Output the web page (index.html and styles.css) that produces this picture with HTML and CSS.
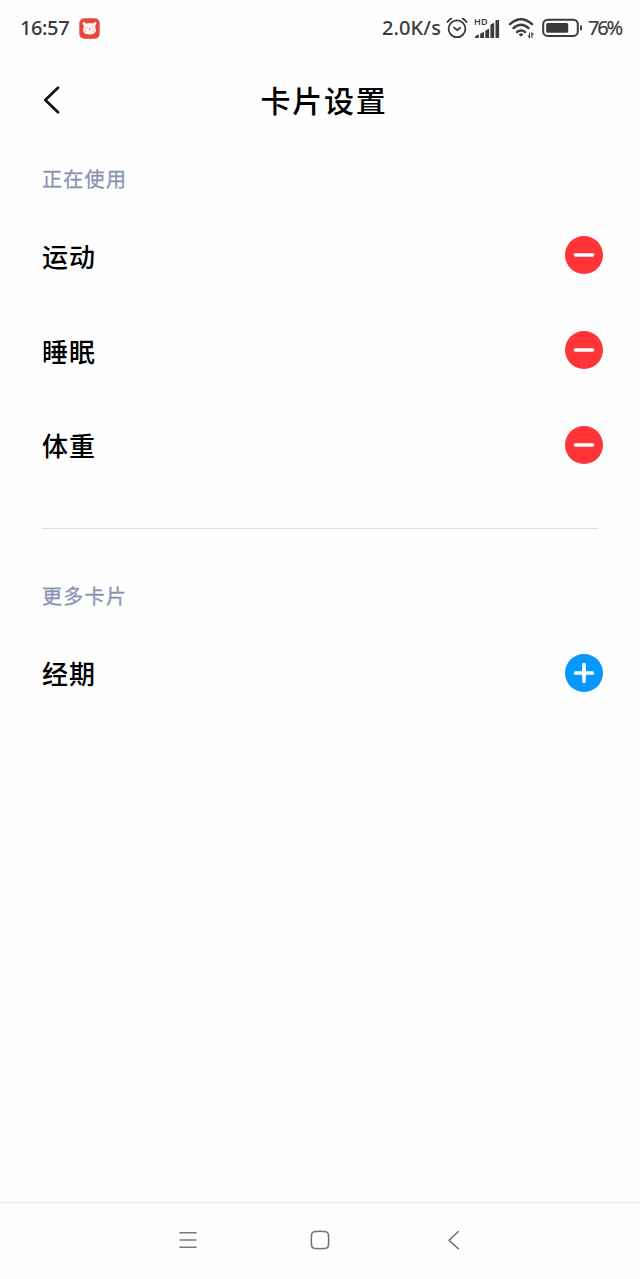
FILE: index.html
```html
<!DOCTYPE html>
<html lang="zh-CN">
<head>
<meta charset="utf-8">
<title>卡片设置</title>
<link rel="stylesheet" href="styles.css">
</head>
<body>
<div class="screen">
  <div class="status">
    <span class="time">16:57</span>
    <svg class="app" width="21" height="21" viewBox="0 0 21 21"><rect x=".3" y=".3" width="20.4" height="20.4" rx="5" fill="#e9463f"/><path d="M3.6 4.4Q5.5 3 7 5.4Q10.5 4.8 14 5.4Q15.5 3 17.4 4.4Q17.8 6.6 16 7.7Q16.6 10 17 12.5Q16.5 16.6 10.5 16.6T4 12.5Q4.4 10 5 7.7Q3.2 6.6 3.6 4.4Z" fill="#fff0ec"/><circle cx="7.8" cy="9.8" r=".6" fill="#caa"/><circle cx="13.2" cy="9.8" r=".6" fill="#caa"/><circle cx="10.5" cy="11" r=".8" fill="#877"/><circle cx="6.5" cy="13" r="1.1" fill="#f9c9c0"/><circle cx="14.5" cy="13" r="1.1" fill="#f9c9c0"/></svg>
    <span class="speed">2.0K/s</span>
    <svg class="alarm" width="22" height="22" viewBox="0 0 22 22" fill="none" stroke="#3b3b3b" stroke-width="1.8" stroke-linecap="round" stroke-linejoin="round"><circle cx="11" cy="11.8" r="8.4"/><path d="M1.4 5Q3 2.6 5.4 1.6M16.6 1.6Q19 2.6 20.6 5M8 10.4L11 13.2L14.2 10.8"/></svg>
    <div class="signal">
      <span class="hd">HD</span>
      <svg width="26" height="20" viewBox="0 0 26 20" fill="#3b3b3b"><path d="M1 17.4Q1 15.8 4.8 14.6V18H1.6Q1 18 1 17.4Z"/><path d="M6.2 13.8L10 11.8V18H6.2Z"/><path d="M11.3 10.8L15.1 8.4V18H11.3Z"/><path d="M16.4 5.2Q16.4 4.6 17 4.2L20.2 2.8V18H16.4Z"/><rect x="21.5" y="0" width="3.6" height="18" rx=".8"/></svg>
    </div>
    <svg class="wifi" width="27" height="22" viewBox="0 0 27 22" fill="none" stroke="#3b3b3b" stroke-width="2.4" stroke-linecap="round"><path d="M2 7.2Q13 -2.8 24 7.2M5.5 11.2Q13 4.4 20.5 11.2M9 15Q13 11.8 17 15"/><path d="M10.6 17.3Q13 15.4 15.4 17.3L13 19.8Z" fill="#3b3b3b" stroke="none"/><path d="M21.5 16V20.5L20.2 19M23.9 20.5V16L25.2 17.5" stroke-width="1.1"/></svg>
    <svg class="battery" width="41" height="20" viewBox="0 0 41 20"><rect x="1.2" y="1.7" width="34.6" height="16.2" rx="4.5" fill="none" stroke="#3b3b3b" stroke-width="2"/><rect x="4.2" y="5" width="22" height="9.8" rx="1.5" fill="#3b3b3b"/><rect x="38" y="7.2" width="1.9" height="5.2" rx=".8" fill="#3b3b3b"/></svg>
    <span class="percent">76%</span>
  </div>
  <header class="header">
    <svg class="back" width="20" height="30" viewBox="0 0 20 30" fill="none" stroke="#111" stroke-width="2.7" stroke-linecap="round" stroke-linejoin="round"><path d="M16 2.8L3.3 15L16 27.2"/></svg>
    <h1 class="title">卡片设置</h1>
  </header>
  <main class="content">
    <section class="group">
      <h2 class="label">正在使用</h2>
      <div class="row"><span>运动</span><svg class="action" viewBox="0 0 38 38"><circle cx="19" cy="19" r="19" fill="#ff3436"/><path d="M10.5 19H27.5" stroke="#fff" stroke-width="3.6" stroke-linecap="round"/></svg></div>
      <div class="row"><span>睡眠</span><svg class="action" viewBox="0 0 38 38"><circle cx="19" cy="19" r="19" fill="#ff3436"/><path d="M10.5 19H27.5" stroke="#fff" stroke-width="3.6" stroke-linecap="round"/></svg></div>
      <div class="row"><span>体重</span><svg class="action" viewBox="0 0 38 38"><circle cx="19" cy="19" r="19" fill="#ff3436"/><path d="M10.5 19H27.5" stroke="#fff" stroke-width="3.6" stroke-linecap="round"/></svg></div>
    </section>
    <section class="group more">
      <h2 class="label">更多卡片</h2>
      <div class="row"><span>经期</span><svg class="action" viewBox="0 0 38 38"><circle cx="19" cy="19" r="19" fill="#0698fe"/><path d="M10.5 19H27.5M19 10.5V27.5" stroke="#fff" stroke-width="3.6" stroke-linecap="round"/></svg></div>
    </section>
  </main>
  <nav class="nav">
    <svg width="20" height="20" viewBox="0 0 20 20" stroke="#777" stroke-width="1.5" stroke-linecap="round"><path d="M4 2.8H20M4 10H20M4 17.2H20"/></svg>
    <svg width="20" height="20" viewBox="0 0 20 20" fill="none" stroke="#777" stroke-width="1.6"><path d="M10 1.3Q14 1.3 16 1.8Q18 2.3 18.3 4Q18.7 6 18.7 10T18.3 16Q18 17.8 16 18.3Q14 18.7 10 18.7T4 18.3Q2 17.8 1.7 16Q1.3 14 1.3 10T1.7 4Q2 2.3 4 1.8Q6 1.3 10 1.3Z"/></svg>
    <svg width="20" height="20" viewBox="0 0 20 20" fill="none" stroke="#777" stroke-width="1.6" stroke-linecap="round" stroke-linejoin="round"><path d="M14.3 1.5L5 10.3L14.3 18.7"/></svg>
  </nav>
</div>
</body>
</html>
```
FILE: styles.css
```css
* { box-sizing: border-box; }
body { margin: 0; background: #fff; color: #000; font-family: "Noto Sans CJK SC", sans-serif; }
svg { display: block; flex: none; overflow: visible; }
.screen { height: 1279px; display: flex; flex-direction: column; background: #fefefe; }
.status { height: 56px; display: flex; align-items: center; padding-left: 20px; color: #3b3b3b; font: 500 20px/56px "Noto Sans", sans-serif; white-space: nowrap; }
.time { width: 59px; letter-spacing: -.4px; }
.speed { width: 64px; margin-left: 282px; letter-spacing: .1px; }
.signal { width: 26px; height: 23px; margin-left: 6px; display: grid; }
.signal > * { grid-area: 1 / 1; }
.signal svg { align-self: end; }
.hd { font: 600 9px/10px "Noto Sans", sans-serif; align-self: start; letter-spacing: .3px; }
.wifi { margin-left: 8px; }
.battery { margin-left: 7px; margin-top: -1px; }
.percent { margin-left: 5px; letter-spacing: -2.2px; font-weight: 400; -webkit-text-stroke: .2px #3b3b3b; }
.header { height: 88px; display: grid; grid-template-columns: 60px 1fr 60px; align-items: center; padding: 0 42px; }
.title { margin: -2px -8px 0 0; font-size: 30px; font-weight: 500; line-height: 44px; letter-spacing: 1.8px; text-align: center; }
.content { flex: 1; padding: 13px 42px 0; }
.label { margin: 0 0 7px; font-size: 20px; font-weight: 400; -webkit-text-stroke: .3px #8b93b3; line-height: 44px; letter-spacing: 1.3px; color: #8b93b3; }
.row { height: 94.7px; margin-right: -5px; display: flex; align-items: center; justify-content: space-between; font-size: 26px; font-weight: 500; letter-spacing: 1px; }
.action { width: 38px; height: 38px; }
.more { border-top: 1px solid #dfdfdf; margin-top: 36px; padding-top: 45px; }
.more .action { margin-top: 1px; }
.nav { height: 77px; padding-bottom: 2px; border-top: 1px solid #e8e8e8; display: flex; align-items: center; justify-content: center; gap: 114px; }
```
